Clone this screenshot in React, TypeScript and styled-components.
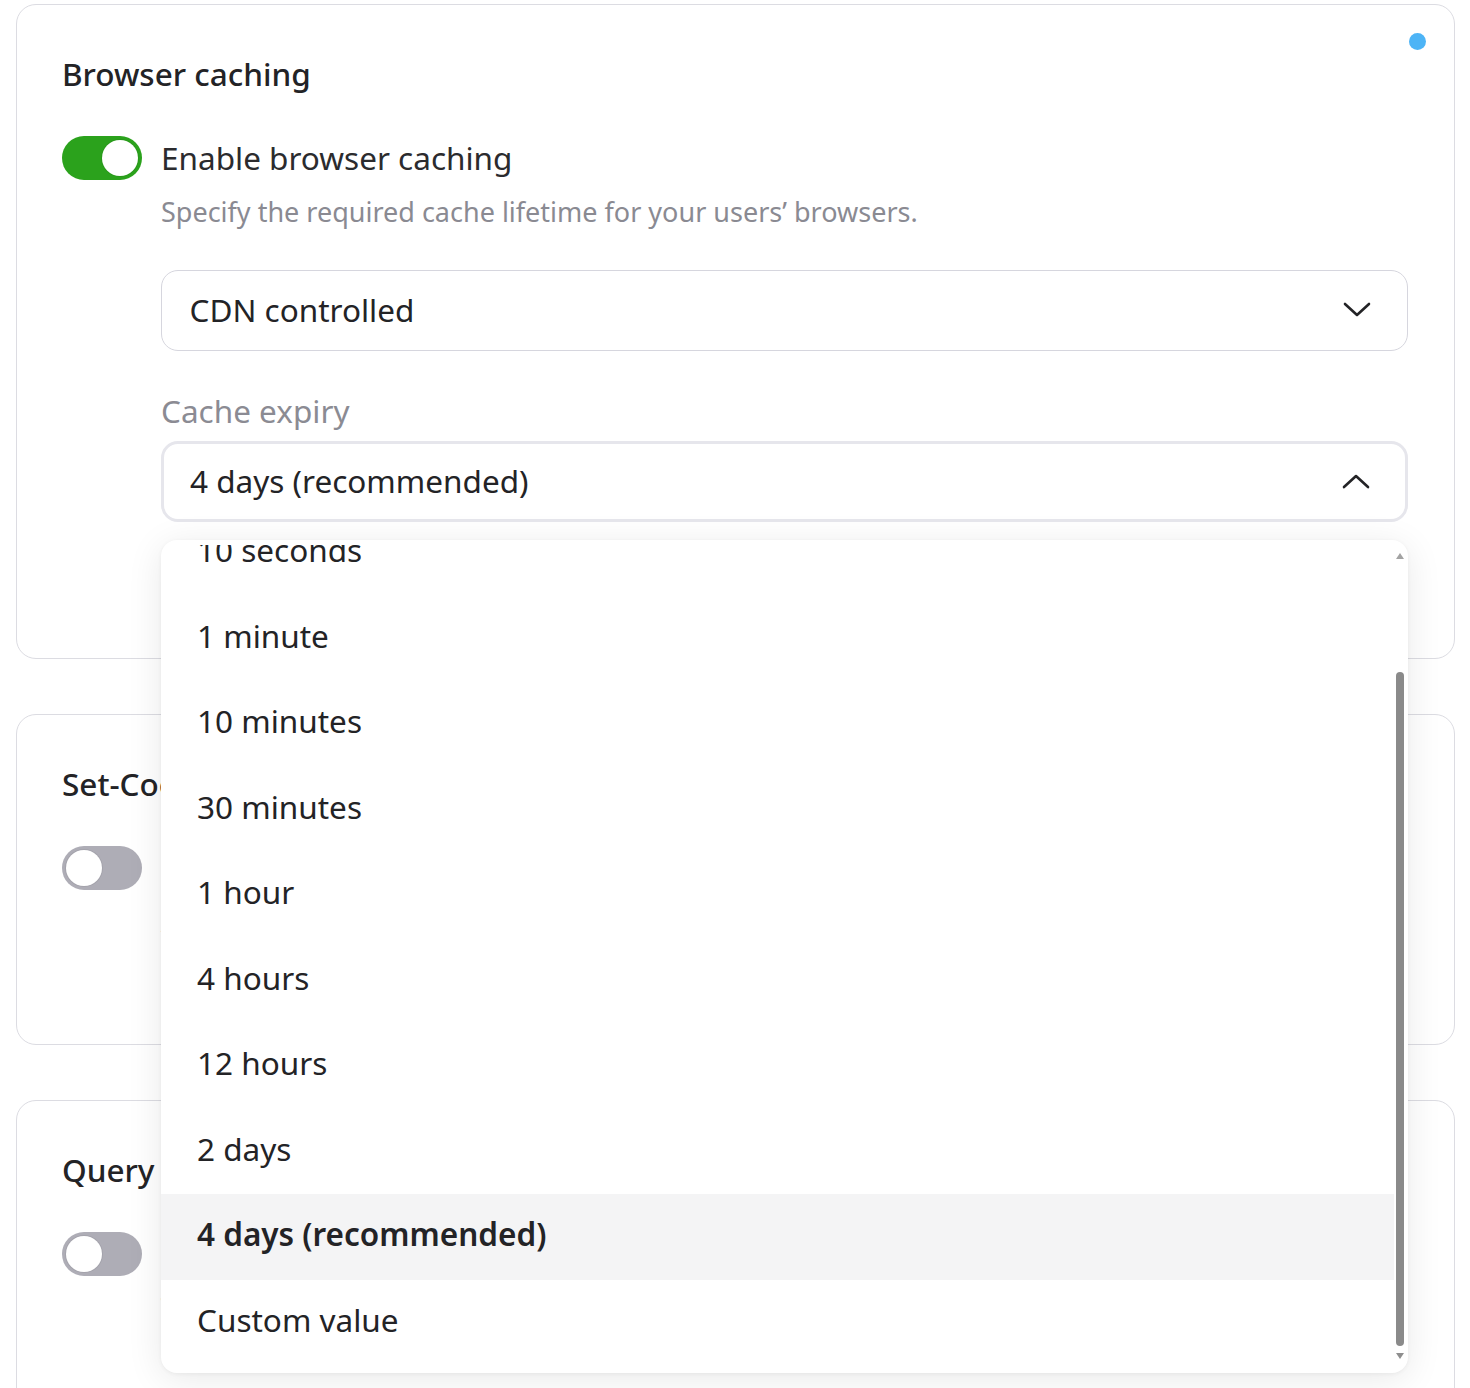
import React from "react";
import styled, { createGlobalStyle } from "styled-components";

const Global = createGlobalStyle`
  html, body {
    margin: 0;
    padding: 0;
    background: #ffffff;
    overflow: hidden;
  }
  body {
    font-family: "Noto Sans", "Open Sans", sans-serif;
    color: #232326;
  }
`;

const Page = styled.div`
  display: flex;
  flex-direction: column;
  gap: 55px;
  padding: 4px 15px 0 16px;
`;

const Card = styled.section<{ $pb: number }>`
  position: relative;
  border: 1.5px solid #dcdce2;
  border-radius: 20px;
  padding: 49px 46px ${(p) => p.$pb}px 45px;
  display: flex;
  flex-direction: column;
`;

const Dot = styled.span`
  position: absolute;
  top: 28px;
  right: 28px;
  width: 17px;
  height: 17px;
  border-radius: 50%;
  background: #4db4f6;
`;

const Title = styled.h2`
  margin: 0;
  font-size: 31.5px;
  line-height: 40px;
  font-weight: 500;
  color: #232326;
`;

const ToggleRow = styled.div`
  display: flex;
  align-items: center;
  gap: 19px;
  margin-top: 42px;
`;

const Switch = styled.span<{ $on: boolean }>`
  flex: none;
  box-sizing: border-box;
  width: 80px;
  height: 44px;
  border-radius: 22px;
  padding: 4px;
  display: flex;
  justify-content: ${(p) => (p.$on ? "flex-end" : "flex-start")};
  background: ${(p) => (p.$on ? "#2ba21c" : "#aeadb6")};
`;

const Knob = styled.span`
  width: 36px;
  height: 36px;
  border-radius: 50%;
  background: #ffffff;
  box-shadow: 0 0 0 1px rgba(0, 0, 0, 0.06);
`;

const Label = styled.span`
  font-size: 31.5px;
  line-height: 40px;
  color: #2b2b2e;
  white-space: nowrap;
`;

const Body = styled.div`
  margin-left: 99px;
  display: flex;
  flex-direction: column;
`;

const Description = styled.p`
  margin: 15px 0 0;
  font-size: 27px;
  line-height: 34px;
  color: #8a8a92;
`;

const FieldLabel = styled.div`
  margin-top: 40px;
  font-size: 31.5px;
  line-height: 40px;
  color: #8b8b93;
`;

const SelectWrap = styled.div<{ $mt: number }>`
  position: relative;
  margin-top: ${(p) => p.$mt}px;
`;

const SelectBox = styled.div<{ $focused?: boolean }>`
  box-sizing: border-box;
  height: 81px;
  border-radius: 17px;
  border: ${(p) => (p.$focused ? "3px solid #e6e6ec" : "1.5px solid #d6d6de")};
  padding: 0 ${(p) => (p.$focused ? 35 : 36.5)}px 2px
    ${(p) => (p.$focused ? 26 : 27.5)}px;
  display: flex;
  align-items: center;
  justify-content: space-between;
  font-size: 31.5px;
  color: #232326;
  background: #fff;
`;

const Dropdown = styled.div`
  position: absolute;
  z-index: 10;
  left: 0;
  right: 0;
  top: 99px;
  height: 833px;
  background: #ffffff;
  border-radius: 16px;
  box-shadow: 0 6px 36px rgba(0, 0, 0, 0.09), 0 1px 4px rgba(0, 0, 0, 0.05);
  display: flex;
  overflow: hidden;
`;

const Viewport = styled.div`
  flex: 1;
  overflow: hidden;
  margin-top: 5px;
`;

const List = styled.ul`
  list-style: none;
  margin: -34.75px 0 0;
  padding: 0;
`;

const Option = styled.li<{ $active?: boolean }>`
  box-sizing: border-box;
  height: 85.5px;
  display: flex;
  align-items: center;
  padding: 0 0 7px 36px;
  font-size: 31.5px;
  font-weight: ${(p) => (p.$active ? 600 : 400)};
  color: #232326;
  white-space: nowrap;
  background: ${(p) => (p.$active ? "#f4f4f5" : "transparent")};
`;

const ScrollCol = styled.div`
  flex: none;
  width: 14px;
  padding: 12px 3px 13px 1px;
  box-sizing: border-box;
  display: flex;
  flex-direction: column;
  align-items: center;
`;

const Arrow = styled.span<{ $up?: boolean }>`
  width: 0;
  height: 0;
  border-left: 4.5px solid transparent;
  border-right: 4.5px solid transparent;
  ${(p) =>
    p.$up
      ? "border-bottom: 6px solid #a3a3a3;"
      : "border-top: 6px solid #8e8e8e;"}
  margin: 1px 0;
`;

const Track = styled.div`
  flex: 1;
  width: 100%;
  display: flex;
  flex-direction: column;
  align-items: center;
  padding-top: 112px;
  box-sizing: border-box;
`;

const Thumb = styled.div`
  width: 8px;
  height: 674px;
  border-radius: 4px;
  background: #8a8a8a;
`;

const Chevron = ({ up }: { up?: boolean }) => (
  <svg width="28" height="16" viewBox="0 0 28 16" fill="none">
    <polyline
      points={up ? "2,14 14,3 26,14" : "2,2 14,13 26,2"}
      stroke="#232326"
      strokeWidth="2.6"
      strokeLinecap="round"
      strokeLinejoin="round"
    />
  </svg>
);

const options = [
  "10 seconds",
  "1 minute",
  "10 minutes",
  "30 minutes",
  "1 hour",
  "4 hours",
  "12 hours",
  "2 days",
  "4 days (recommended)",
  "Custom value",
];

export default function App() {
  return (
    <>
      <Global />
      <Page>
        <Card $pb={136}>
          <Dot />
          <Title>Browser caching</Title>
          <ToggleRow>
            <Switch $on>
              <Knob />
            </Switch>
            <Label>Enable browser caching</Label>
          </ToggleRow>
          <Body>
            <Description>
              Specify the required cache lifetime for your users’ browsers.
            </Description>
            <SelectWrap $mt={41}>
              <SelectBox>
                <span>CDN controlled</span>
                <Chevron />
              </SelectBox>
            </SelectWrap>
            <FieldLabel>Cache expiry</FieldLabel>
            <SelectWrap $mt={10}>
              <SelectBox $focused>
                <span>4 days (recommended)</span>
                <Chevron up />
              </SelectBox>
              <Dropdown>
                <Viewport>
                  <List>
                    {options.map((o) => (
                      <Option key={o} $active={o === "4 days (recommended)"}>
                        {o}
                      </Option>
                    ))}
                  </List>
                </Viewport>
                <ScrollCol>
                  <Arrow $up />
                  <Track>
                    <Thumb />
                  </Track>
                  <Arrow />
                </ScrollCol>
              </Dropdown>
            </SelectWrap>
          </Body>
        </Card>
        <Card $pb={105}>
          <Title>Set-Cookie headers</Title>
          <ToggleRow>
            <Switch $on={false}>
              <Knob />
            </Switch>
            <Label>Cache responses with cookies</Label>
          </ToggleRow>
          <Body>
            <Description>Allow responses that set cookies.</Description>
          </Body>
        </Card>
        <Card $pb={100}>
          <Title>Query string</Title>
          <ToggleRow>
            <Switch $on={false}>
              <Knob />
            </Switch>
            <Label>Ignore query string</Label>
          </ToggleRow>
          <Body>
            <Description>Treat query strings as one resource.</Description>
          </Body>
        </Card>
      </Page>
    </>
  );
}
